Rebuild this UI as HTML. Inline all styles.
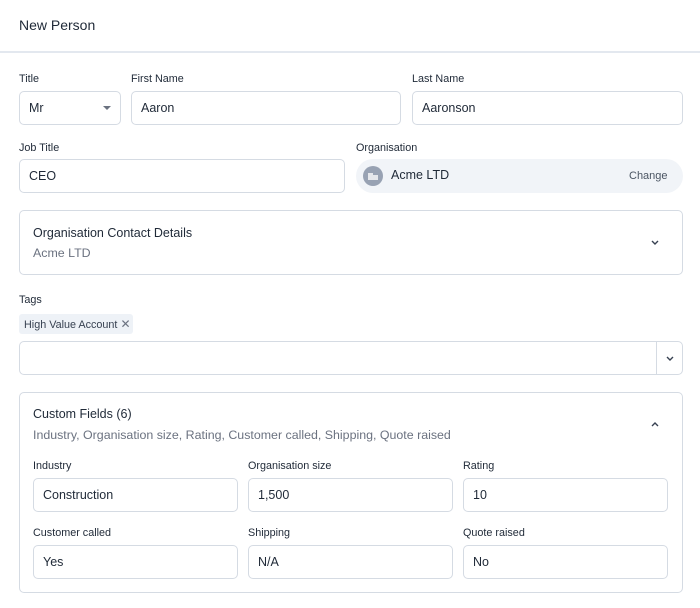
<!DOCTYPE html>
<html><head><meta charset="utf-8"><style>
*{box-sizing:border-box;margin:0;padding:0}
body{width:700px;height:608px;background:#fff;font-family:"Liberation Sans",sans-serif;color:#1f2937;position:relative;overflow:hidden}
.a{position:absolute}
.lbl{position:absolute;font-size:10.8px;color:#1f2937}
.in{position:absolute;height:34px;border:1px solid #d5dbe3;border-radius:5px;font-size:12.5px;padding-left:9px;line-height:32px;color:#1f2937;background:#fff}
.box{position:absolute;border:1px solid #d5dbe3;border-radius:5px;background:#fff}
.t{position:absolute;font-size:12.5px;color:#1f2937}
.s{position:absolute;font-size:12.4px;color:#6b7280}
</style></head><body>
<div class="a" style="left:19px;top:17px;font-size:14px;color:#1f2937">New Person</div>
<div class="a" style="left:0;top:51px;width:700px;height:2px;background:#e3e8ef"></div>

<div class="lbl" style="left:19px;top:73px">Title</div>
<div class="in" style="left:19px;top:91px;width:102px">Mr<svg class="a" style="left:83px;top:14px" width="8" height="5"><path d="M0 0L8 0L4 4Z" fill="#6b7280"/></svg></div>
<div class="lbl" style="left:131px;top:73px">First Name</div>
<div class="in" style="left:131px;top:91px;width:270px">Aaron</div>
<div class="lbl" style="left:412px;top:73px">Last Name</div>
<div class="in" style="left:412px;top:91px;width:271px">Aaronson</div>

<div class="lbl" style="left:19px;top:142px">Job Title</div>
<div class="in" style="left:19px;top:159px;width:326px">CEO</div>
<div class="lbl" style="left:356px;top:142px">Organisation</div>
<div class="a" style="left:356px;top:159px;width:327px;height:34px;border-radius:17px;background:#f1f4f8">
<div class="a" style="left:7px;top:7px;width:20px;height:20px;border-radius:10px;background:#98a2b3"><div class="a" style="left:5px;top:7px;width:5px;height:7px;background:#e5e7eb"></div><div class="a" style="left:10px;top:9px;width:5px;height:5px;background:#e5e7eb"></div></div>
<div class="t" style="left:35px;top:9px">Acme LTD</div>
<div class="a" style="left:273px;top:11px;font-size:11px;color:#4b5563">Change</div>
</div>

<div class="box" style="left:19px;top:210px;width:664px;height:65px">
<div class="t" style="left:13px;top:15px">Organisation Contact Details</div>
<div class="s" style="left:13px;top:35px">Acme LTD</div>
<svg class="a" style="left:631px;top:29px" width="8" height="6"><path d="M1 1L4 4L7 1" stroke="#374151" stroke-width="1.4" fill="none"/></svg>
</div>

<div class="lbl" style="left:19px;top:294px">Tags</div>
<div class="a" style="left:19px;top:314px;width:114px;height:20px;border-radius:3px;background:#eef2f7;font-size:10.8px;line-height:20px;padding-left:5px;color:#374151">High Value Account <span style="color:#6b7280;font-size:12px">✕</span></div>
<div class="box" style="left:19px;top:341px;width:664px;height:34px">
<div class="a" style="left:636px;top:0;width:1px;height:32px;background:#d5dbe3"></div>
<svg class="a" style="left:646px;top:14px" width="8" height="6"><path d="M1 1L4 4L7 1" stroke="#374151" stroke-width="1.4" fill="none"/></svg>
</div>

<div class="box" style="left:19px;top:392px;width:664px;height:201px">
<div class="t" style="left:13px;top:14px">Custom Fields (6)</div>
<div class="s" style="left:13px;top:35px">Industry, Organisation size, Rating, Customer called, Shipping, Quote raised</div>
<svg class="a" style="left:631px;top:28px" width="8" height="6"><path d="M1 5L4 2L7 5" stroke="#374151" stroke-width="1.4" fill="none"/></svg>
</div>
<div class="lbl" style="left:33px;top:460px">Industry</div>
<div class="in" style="left:33px;top:478px;width:205px">Construction</div>
<div class="lbl" style="left:248px;top:460px">Organisation size</div>
<div class="in" style="left:248px;top:478px;width:205px">1,500</div>
<div class="lbl" style="left:463px;top:460px">Rating</div>
<div class="in" style="left:463px;top:478px;width:205px">10</div>
<div class="lbl" style="left:33px;top:527px">Customer called</div>
<div class="in" style="left:33px;top:545px;width:205px">Yes</div>
<div class="lbl" style="left:248px;top:527px">Shipping</div>
<div class="in" style="left:248px;top:545px;width:205px">N/A</div>
<div class="lbl" style="left:463px;top:527px">Quote raised</div>
<div class="in" style="left:463px;top:545px;width:205px">No</div>
</body></html>
